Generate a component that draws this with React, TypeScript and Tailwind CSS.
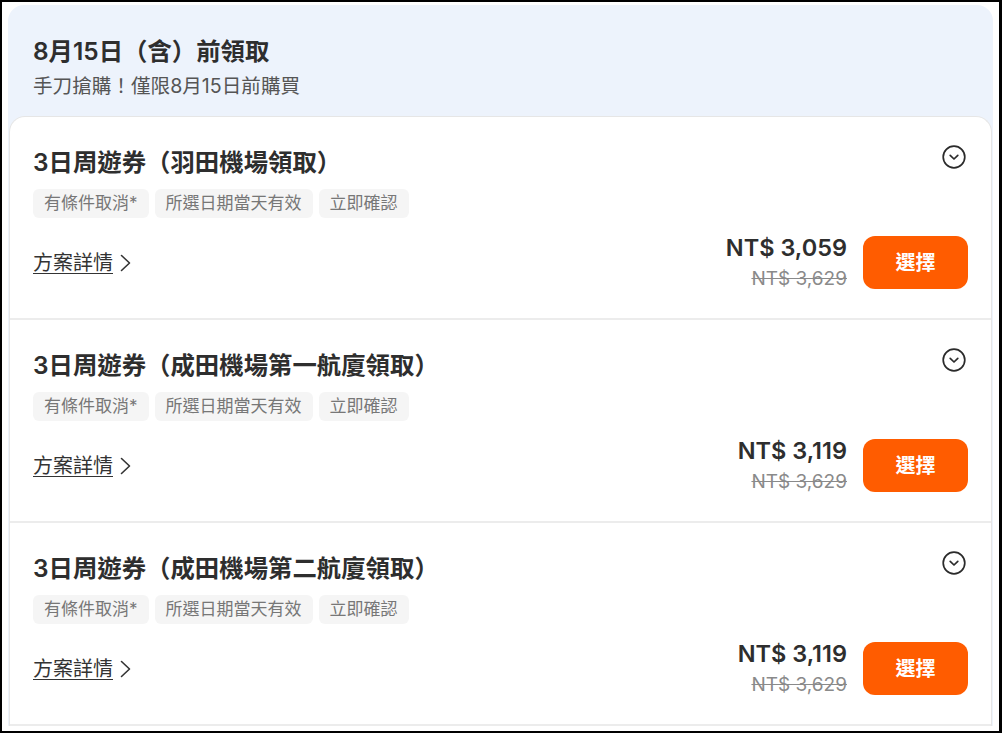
const font = "font-['Inter','Noto_Sans_CJK_TC',sans-serif]"

const plans = [
  { title: '3日周遊券（羽田機場領取）', price: 'NT$ 3,059', old: 'NT$ 3,629' },
  { title: '3日周遊券（成田機場第一航廈領取）', price: 'NT$ 3,119', old: 'NT$ 3,629' },
  { title: '3日周遊券（成田機場第二航廈領取）', price: 'NT$ 3,119', old: 'NT$ 3,629' },
]

const tags = ['有條件取消*', '所選日期當天有效', '立即確認']

function ExpandIcon() {
  return (
    <svg width="24" height="24" viewBox="0 0 24 24" fill="none" stroke="#2b2b2b" strokeWidth="1.7" strokeLinecap="round" strokeLinejoin="round">
      <circle cx="12" cy="12" r="10.8" />
      <polyline points="8.2,10.4 12,14 15.8,10.4" />
    </svg>
  )
}

function ChevronRight() {
  return (
    <svg width="16" height="20" viewBox="0 0 16 20" fill="none" stroke="#333" strokeWidth="1.6" strokeLinecap="round" strokeLinejoin="round">
      <polyline points="4.5,2.5 12.5,10 4.5,17.5" />
    </svg>
  )
}

function PlanRow({ title, price, old }: { title: string; price: string; old: string }) {
  return (
    <div className="pl-[23px] pr-[23px] pt-[31px] pb-[27px] border-b-2 border-[#ececec]">
      <div className="flex items-start justify-between">
        <h3 className="text-[24.4px] leading-[28px] font-semibold text-[#2e2e2e]">{title}</h3>
        <div className="-mt-[3px] mr-[2px]">
          <ExpandIcon />
        </div>
      </div>
      <div className="flex gap-[6px] mt-[13px]">
        {tags.map((t) => (
          <span key={t} className="h-[29px] px-[11px] rounded-md bg-[#f5f5f5] text-[17px] leading-[29px] text-[#777]">
            {t}
          </span>
        ))}
      </div>
      <div className="flex items-center justify-between mt-[16px]">
        <a className="flex items-center gap-[4px] text-[20px] leading-[26px] text-[#333]">
          <span className="underline underline-offset-[3px] decoration-1">方案詳情</span>
          <ChevronRight />
        </a>
        <div className="flex items-center gap-4">
          <div className="flex flex-col items-end">
            <span className="text-[23.5px] leading-[28px] font-semibold text-[#2e2e2e]">{price}</span>
            <span className="mt-[5px] text-[19px] leading-[24px] text-[#8a8a8a] line-through">{old}</span>
          </div>
          <button className="w-[105px] h-[53px] rounded-xl bg-[#ff5c00] text-white text-[20px] font-bold">選擇</button>
        </div>
      </div>
    </div>
  )
}

export default function App() {
  return (
    <div className={`${font} w-[1002px] h-[733px] overflow-hidden bg-white border-2 border-r-[3px] border-black`}>
      <div className="mt-[3px] mx-[6px] rounded-t-2xl bg-[#edf3fc] px-[1px]">
        <div className="px-6 pt-[30px] pb-[17px]">
          <h2 className="text-[24.4px] leading-[32px] font-semibold text-[#2e2e2e]">8月15日（含）前領取</h2>
          <p className="mt-[6px] text-[19.6px] leading-[26px] text-[#555]">手刀搶購！僅限8月15日前購買</p>
        </div>
        <div className="bg-white rounded-t-2xl border-x border-t border-[#e6e6e6]">
          {plans.map((p) => (
            <PlanRow key={p.title} {...p} />
          ))}
        </div>
      </div>
    </div>
  )
}
